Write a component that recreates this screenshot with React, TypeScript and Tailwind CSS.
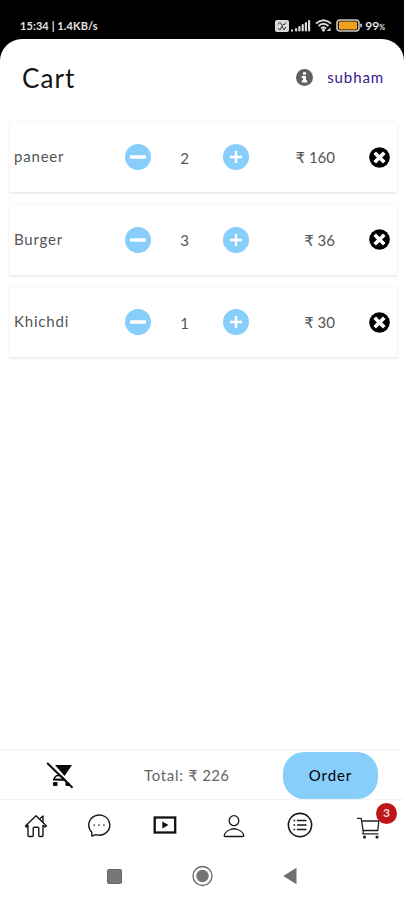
import React from 'react';

type Item = {
  name: string;
  qty: number;
  price: number;
};

const items: Item[] = [
  { name: 'paneer', qty: 2, price: 160 },
  { name: 'Burger', qty: 3, price: 36 },
  { name: 'Khichdi', qty: 1, price: 30 },
];

const StatusBar: React.FC = () => (
  <div className="flex h-[39px] items-center justify-between pt-[12px] pr-[19px] pl-5 text-[#e4e4e4]">
    <span className="pb-[1px] text-[11px] leading-none font-bold tracking-[0.1px] whitespace-pre">15:34 | 1.4KB/s</span>
    <div className="flex items-center">
      <svg width="14" height="12" viewBox="0 0 14 12">
        <rect width="14" height="12" rx="2" fill="#d8d8d8" />
        <path d="M3 4.5Q5 1 6 4T9 4M11 2.5L9 5M3 8l2 2 2-4 2 4 2-3" fill="none" stroke="#333" strokeWidth="1" />
      </svg>
      <svg className="ml-[2px]" width="20" height="13" viewBox="0 0 20 13" fill="#d8d8d8">
        <rect x="0" y="10.5" width="2" height="2" />
        <rect x="4" y="9" width="2.2" height="3.5" rx="1" />
        <rect x="7.3" y="7" width="2.2" height="5.5" rx="1" />
        <rect x="10.6" y="5" width="2.2" height="7.5" rx="1" />
        <rect x="13.8" y="3" width="2.2" height="9.5" rx="1" />
        <rect x="17" y="1" width="2.2" height="11.5" rx="1" />
      </svg>
      <svg className="ml-[4px]" width="17" height="13" viewBox="0 0 17 13" fill="none" stroke="#d8d8d8" strokeWidth="1.8">
        <path d="M1 4.5Q8.5 -2 16 4.5M3.5 7Q8.5 2.5 13.5 7M6 9.5Q8.5 7 11 9.5" />
        <path d="M8.5 9L10.5 11L8.5 13L6.5 11Z" fill="#d8d8d8" stroke="none" />
        <path d="M11.5 12L15.5 8.5V12Z" fill="#d8d8d8" stroke="none" />
      </svg>
      <svg className="ml-[4px]" width="26" height="13" viewBox="0 0 26 13">
        <rect x="1" y="1" width="22" height="11" rx="3" fill="#111" stroke="#c9c9c9" strokeWidth="1.6" />
        <rect x="3" y="2.5" width="18" height="8" rx="1" fill="#f0a019" />
        <rect x="24.3" y="4.5" width="1.5" height="4" rx="0.7" fill="#d8d8d8" />
      </svg>
      <span className="ml-[3px] text-[12px] leading-none font-bold">
        99<span className="text-[7px]">%</span>
      </span>
    </div>
  </div>
);

const InfoIcon = () => (
  <svg width="17" height="17" viewBox="0 0 17 17">
    <circle cx="8.5" cy="8.5" r="8.5" fill="#606060" />
    <path d="M7 3.2h3v2.5H7zM5.8 7H10v4.3h1.2v2.2H5.8v-2.2H7V9H5.8z" fill="#fff" />
  </svg>
);

const StepIcon = ({ plus = false }: { plus?: boolean }) => (
  <svg width="26" height="26" viewBox="0 0 26 26">
    <circle cx="13" cy="13" r="13" fill="#87cefa" />
    {plus ? (
      <path d="M7 13h12M13 7v12" stroke="#fff" strokeWidth="2.4" />
    ) : (
      <rect x="5" y="11.2" width="16" height="3.6" rx="0.8" fill="#fff" />
    )}
  </svg>
);

const RemoveIcon = () => (
  <svg width="21" height="21" viewBox="0 0 21 21">
    <circle cx="10.5" cy="10.5" r="10.3" fill="#000" />
    <path d="M5.7 5.7l9.6 9.6M15.3 5.7l-9.6 9.6" stroke="#fff" strokeWidth="3.7" />
  </svg>
);

const Rupee = () => <span className="font-['DejaVu_Sans',sans-serif]">₹</span>;

const CartRow: React.FC<{ item: Item }> = ({ item }) => (
  <div className="flex h-[72px] items-center rounded-[4px] border border-[#f7f7f7] border-b-[#eeeeee] bg-white pr-[7px] pl-[5px] text-[15px] text-[#555] shadow-[0_1px_2px_#00000012]">
    <span className="w-[111px] pb-[1px] tracking-[0.8px]">{item.name}</span>
    <button><StepIcon /></button>
    <span className="w-[72px] pt-[2px] pr-[5px] text-center">{item.qty}</span>
    <button><StepIcon plus /></button>
    <span className="w-[86px] pt-[2px] text-right whitespace-nowrap"><Rupee /> {item.price}</span>
    <button className="ml-auto"><RemoveIcon /></button>
  </div>
);

const ClearCartIcon = () => (
  <svg width="28" height="28" viewBox="0 0 28 28">
    <path d="M9 3h17l-7.5 11z" fill="#0a0a0a" />
    <path d="M8 17.5q1-4 4-4h4l3.5 4.5z" fill="none" stroke="#0a0a0a" strokeWidth="1.5" />
    <path d="M7 17.5h13" stroke="#0a0a0a" strokeWidth="1.8" />
    <rect x="7" y="20" width="4.5" height="4" rx="1" fill="#0a0a0a" />
    <rect x="19.5" y="20" width="4" height="4" rx="1" fill="#0a0a0a" />
    <path d="M2.5 0L28 24.5" stroke="#fff" strokeWidth="1.2" />
    <path d="M1.2 1L26.5 25.8" stroke="#0a0a0a" strokeWidth="2" />
  </svg>
);

const HomeIcon = () => (
  <svg width="24" height="24" viewBox="0 0 24 24" fill="none" stroke="#181818" strokeWidth="1.4" strokeLinejoin="round" strokeLinecap="round">
    <path d="M1.5 12L12 1.8 22.5 12l-1.5 1-2-1.600V21.500q0 1-1 1h-2.200q-1 0-1-1V14.500q0-1.200-1-1.200h-3.600q-1 0-1 1.200v7q0 1-1 1H5q-1 0-1-1V11.500L2.500 13z" />
    <path d="M16 4.5l3-2.5V8" />
  </svg>
);

const ChatIcon = () => (
  <svg width="24" height="24" viewBox="0 0 24 24" fill="none" stroke="#181818" strokeWidth="1.4">
    <path d="M4.8 18.2A10.5 10.1 0 1 1 9 20.7L4.8 22z" strokeLinejoin="round" />
    <path d="M6.5 11.2H8M11.3 11.2h1.5M16.2 11.2h1.5" strokeWidth="1.8" stroke="#555" />
  </svg>
);

const VideoIcon = () => (
  <svg width="24" height="18" viewBox="0 0 24 18">
    <rect x="1.7" y="1.500" width="20.500" height="15" fill="none" stroke="#111" strokeWidth="2.300" />
    <path d="M9.300 5.500L15.500 9l-6.200 3.500z" fill="#111" />
  </svg>
);

const UserIcon = () => (
  <svg width="22" height="24" viewBox="0 0 22 24" fill="none" stroke="#181818" strokeWidth="1.3">
    <ellipse cx="11" cy="6.700" rx="4.800" ry="5" />
    <path d="M1.200 21.500Q2 17.500 7.500 15.500q3.500-1.500 7 0 5.500 2 6.300 6 0 1-1 1H2.200q-1 0-1-1z" />
  </svg>
);

const ListIcon = () => (
  <svg width="26" height="26" viewBox="0 0 26 26" fill="none" stroke="#181818" strokeWidth="1.6">
    <circle cx="13" cy="13" r="11.6" />
    <path d="M10 8.5h9.5M10 13h9.5M10 17.5h9.5" />
    <path d="M6.5 8.5H8.2M6.5 13H8.2M6.5 17.5H8.2" />
  </svg>
);

const CartIcon = () => (
  <svg width="24" height="22" viewBox="0 0 24 22" fill="none" stroke="#202020" strokeWidth="1.3">
    <path d="M0 1.3h4.2l1.9 12.2h14.7l1-9.5H5" strokeLinejoin="round" />
    <path d="M6.3 13.5L6 16.8h15.5" />
    <rect x="6.2" y="18.7" width="2.6" height="2.7" rx="0.5" fill="#181818" stroke="none" />
    <rect x="18.7" y="18.7" width="2.6" height="2.7" rx="0.5" fill="#181818" stroke="none" />
  </svg>
);

const TabBar: React.FC = () => (
  <nav className="flex h-[52px] items-center pl-6">
    <HomeIcon />
    <div className="ml-[39px] pb-[1px]"><ChatIcon /></div>
    <div className="ml-[42px] pb-[2px]"><VideoIcon /></div>
    <div className="ml-[46px]"><UserIcon /></div>
    <div className="ml-[42px] pb-[2px]"><ListIcon /></div>
    <div className="relative ml-[44px] pt-[3px]">
      <CartIcon />
      <span className="absolute -top-[11px] left-[19px] flex h-[21px] w-[21px] items-center justify-center rounded-full bg-[#bd1717] text-[12px] font-bold text-[#f5dada]">
        {items.length}
      </span>
    </div>
  </nav>
);

const SystemBar: React.FC = () => (
  <div className="flex h-[48px] items-center justify-between pr-[107px] pl-[107px]">
    <div className="h-[15px] w-[15px] rounded-[2px] border border-[#666] bg-[#777]" />
    <svg width="22" height="22" viewBox="0 0 22 22">
      <circle cx="10.5" cy="11" r="9.5" fill="none" stroke="#666" strokeWidth="1.3" />
      <circle cx="10.5" cy="11" r="6.2" fill="#757575" />
    </svg>
    <svg width="14" height="18" viewBox="0 0 14 18">
      <path d="M.3 9L13.5.7v16.6z" fill="#707070" />
    </svg>
  </div>
);

const App: React.FC = () => {
  const total = items.reduce((sum, item) => sum + item.price, 0);

  return (
    <div className="flex h-[900px] w-[404px] flex-col overflow-hidden bg-black font-[Lato,'Noto_Sans',sans-serif]">
      <StatusBar />
      <div className="flex flex-1 flex-col rounded-t-[22px] bg-white">
        <header className="flex h-[81px] items-center justify-between pr-5 pb-[4px] pl-[22px]">
          <h1 className="pt-[2px] text-[26px] tracking-[1.1px] text-[#151515]">Cart</h1>
          <div className="flex items-center gap-[14px]">
            <InfoIcon />
            <a href="#" className="text-[15px] tracking-[0.9px] text-[#33208f]">subham</a>
          </div>
        </header>

        <main className="flex flex-1 flex-col gap-[10.5px] pt-[1px] pr-[6px] pl-2">
          {items.map((item) => (
            <CartRow key={item.name} item={item} />
          ))}
        </main>

        <div className="flex h-[51px] items-center border-y border-[#f3f3f3] pr-[26px] pl-[46px]">
          <button className="pt-[2px]"><ClearCartIcon /></button>
          <span className="ml-[70px] pt-[2px] text-[15px] tracking-[0.7px] whitespace-nowrap text-[#666]">
            Total: <span className="tracking-[0.3px]"><Rupee /> {total}</span>
          </span>
          <button className="mt-[2px] ml-auto h-[47px] w-[95px] rounded-[21px] bg-[#87cefa] text-[15px] tracking-[0.9px] text-black">
            Order
          </button>
        </div>
        <TabBar />
        <SystemBar />
      </div>
    </div>
  );
};

export default App;
